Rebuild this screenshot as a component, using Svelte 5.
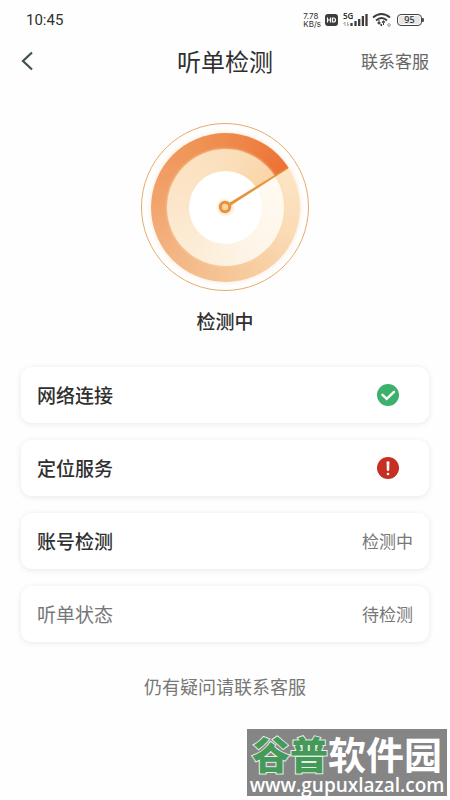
<script>
  const checks = [
    { label: '网络连接', state: 'ok' },
    { label: '定位服务', state: 'error' },
    { label: '账号检测', state: 'running', text: '检测中' },
    { label: '听单状态', state: 'waiting', text: '待检测' }
  ];
</script>

<div class="screen">
  <div class="status">
    <span class="time">10:45</span>
    <div class="indicators">
      <div class="speed"><span>7.78</span><span>KB/s</span></div>
      <svg width="13" height="12" viewBox="0 0 13 12" aria-hidden="true">
        <rect width="13" height="12" rx="3" fill="#3c3c3c" />
        <path d="M2.500 3.500v5M5.500 3.500v5M2.500 6h3M7.500 4h1q2 0 2 2t-2 2h-1z" fill="none" stroke="#fff" stroke-width="1.200" />
      </svg>
      <div class="signal">
        <span>5G</span>
        <svg width="25" height="14" viewBox="0 0 25 14" aria-hidden="true">
          <path d="M.5 11L2 9v4M4.500 9v4L6 11" fill="none" stroke="#aaa" stroke-width="1" />
          <path d="M8.500 10v3M12.500 8v5M16.200 6v7M19.900 3v10M23.500 1v12" stroke="#3c3c3c" stroke-width="2.300" />
        </svg>
      </div>
      <svg class="wifi" width="19" height="14" viewBox="0 0 19 14" aria-hidden="true">
        <path d="M1 4.500Q9.500-2.500 18 4.500M4 7.500Q9.500 2.500 15 7.500" fill="none" stroke="#3c3c3c" stroke-width="1.800" />
        <path d="M7 7v4M5.500 9.500L7 11l1.500-1.500M11.500 12V8M10 9.500L11.500 8 13 9.500" fill="none" stroke="#444" stroke-width="1.100" />
        <path d="M9 11l.5 2" stroke="#333" stroke-width="1.500" />
        <circle cx="17" cy="12" r="1.300" fill="none" stroke="#999" />
      </svg>
      <div class="battery"><span>95</span></div>
    </div>
  </div>

  <header>
    <button class="back" aria-label="返回">
      <svg width="14" height="20" viewBox="0 0 14 20" aria-hidden="true">
        <path d="M11 1.500L2 10l9 8.500" fill="none" stroke="#40504d" stroke-width="2.200" />
      </svg>
    </button>
    <h1>听单检测</h1>
    <a href="#service">联系客服</a>
  </header>

  <main>
    <div class="dial">
      <div class="outer"></div>
      <div class="middle"></div>
      <div class="core"></div>
      <svg viewBox="0 0 170 170" aria-hidden="true">
        <circle cx="85" cy="85" r="83.500" fill="none" stroke="#e5ab6d" />
        <path d="M89.500 81L147.500 45.500l.5.800L90.800 83.200z" fill="#e49338" stroke="#e49338" stroke-width=".5" />
        <circle cx="85" cy="85" r="4.700" fill="#fad5a6" stroke="#e6933d" stroke-width="3" />
      </svg>
    </div>
    <p class="progress">检测中</p>

    <ul>
      {#each checks as item}
        <li class:waiting={item.state === 'waiting'}>
          <span class="label">{item.label}</span>
          {#if item.text}
            <span class="result">{item.text}</span>
          {:else if item.state === 'ok'}
            <svg class="icon" viewBox="0 0 22 22" role="img" aria-label="正常">
              <circle cx="11" cy="11" r="11" fill="#3bb16b" />
              <path d="M5.500 10.800l4.200 4 7.300-7" fill="none" stroke="#fff" stroke-width="2.500" stroke-linecap="round" stroke-linejoin="miter" />
            </svg>
          {:else}
            <svg class="icon" viewBox="0 0 22 22" role="img" aria-label="异常">
              <circle cx="11" cy="11" r="11" fill="#c53022" />
              <path d="M9.600 5.300q0-1 1.400-1t1.400 1l-.2 7.800q-.1.900-1.200.9t-1.200-.9z" fill="#fff" />
              <circle cx="11" cy="17" r="1.300" fill="#fff" />
            </svg>
          {/if}
        </li>
      {/each}
    </ul>

    <a class="help" href="#service">仍有疑问请联系客服</a>
  </main>

  <div class="watermark">
    <div class="brand"><b>谷普</b>软件园</div>
    <div class="site">www.gupuxlazal.com</div>
  </div>
</div>

<style>
  :global(body) {
    margin: 0;
    background: #fefefe;
  }
  .screen {
    position: relative;
    min-height: 100vh;
    background: #fefefe;
    color: #303030;
    font-family: 'Noto Sans CJK SC', sans-serif;
  }
  .status {
    display: flex;
    align-items: center;
    justify-content: space-between;
    height: 40px;
    padding: 0 28px 0 26px;
  }
  .time {
    font-family: Roboto, sans-serif;
    font-size: 15px;
    font-weight: 400;
  }
  .indicators {
    display: flex;
    align-items: center;
    gap: 4px;
  }
  .speed {
    display: flex;
    flex-direction: column;
    font: 400 8px/8px Inter, sans-serif;
  }
  .signal {
    position: relative;
    height: 14px;
    margin-left: 1px;
  }
  .signal svg {
    display: block;
  }
  .signal span {
    position: absolute;
    left: 0;
    top: -1px;
    font: 600 8px/8px 'Noto Sans', sans-serif;
  }
  .battery {
    position: relative;
    box-sizing: border-box;
    width: 25px;
    height: 12px;
    margin-left: 2px;
    border: 1px solid #444;
    border-radius: 4px;
    background: #e6e6e6;
    box-shadow: inset 0 0 0 1px #fff;
    font: 500 9px/10px 'Noto Sans', sans-serif;
    text-align: center;
  }
  .battery::after {
    content: '';
    position: absolute;
    right: -3px;
    top: 3px;
    width: 2px;
    height: 4px;
    background: #555;
    border-radius: 0 1px 1px 0;
  }
  header {
    display: grid;
    grid-template-columns: 1fr auto 1fr;
    align-items: center;
    height: 42px;
    padding: 0 21px;
  }
  .back {
    display: flex;
    justify-self: start;
    padding: 0;
    border: 0;
    background: none;
  }
  h1 {
    margin: 0;
    font-size: 24px;
    line-height: 32px;
    font-weight: 400;
  }
  header a {
    justify-self: end;
    color: #666;
    font-size: 17px;
    line-height: 24px;
    text-decoration: none;
  }
  main {
    display: flex;
    flex-direction: column;
    align-items: center;
    padding: 40px 21px 100px;
  }
  .dial {
    display: grid;
    place-items: center;
    width: 170px;
    height: 170px;
  }
  .dial > * {
    grid-area: 1 / 1;
    border-radius: 50%;
  }
  .dial svg {
    position: relative;
    width: 170px;
    height: 170px;
  }
  .outer {
    width: 149px;
    height: 149px;
    background: conic-gradient(from 58deg, #fce5c6, #fadbb4 15%, #f6ca9b 30%, #f3b887 45%, #f2a670 58%, #ef9558 75%, #ee8648 88%, #ed7034);
    box-shadow: 0 0 5px #fce6cf;
  }
  .middle {
    width: 117px;
    height: 117px;
    background: conic-gradient(from 58deg, #fffaf2, #fef5e8 25%, #fcecd6 45%, #fce4c6 65%, #fbdfbb 85%, #fad5a8);
    box-shadow: 0 0 3px #f9d9b2;
  }
  .core {
    width: 73px;
    height: 73px;
    background: radial-gradient(circle, #fce3c4 0 5px, #fff 10px);
  }
  .progress {
    margin: 15px 0 32px;
    font-size: 19px;
    line-height: 28px;
    font-weight: 500;
  }
  ul {
    display: flex;
    flex-direction: column;
    gap: 17px;
    align-self: stretch;
    margin: 0;
    padding: 0;
    list-style: none;
  }
  li {
    display: flex;
    align-items: center;
    justify-content: space-between;
    height: 56px;
    padding: 0 16px;
    border-radius: 11px;
    background: #fff;
    box-shadow: 0 1px 6px rgba(0, 0, 0, 0.09);
  }
  .label {
    font-size: 19px;
    line-height: 28px;
    font-weight: 500;
  }
  .waiting .label {
    color: #777;
    font-weight: 400;
  }
  .result {
    color: #777;
    font-size: 17px;
    line-height: 24px;
  }
  .icon {
    width: 22px;
    height: 22px;
    margin-right: 14px;
  }
  .help {
    margin-top: 31px;
    color: #777;
    font-size: 18px;
    line-height: 26px;
    text-decoration: none;
  }
  .watermark {
    position: absolute;
    right: 3px;
    bottom: 4px;
    width: 200px;
    height: 67px;
    background: #858585;
    color: #fff;
    text-align: center;
    white-space: nowrap;
  }
  .brand {
    font-size: 38px;
    line-height: 47px;
    font-weight: 700;
  }
  .brand b {
    color: #469a59;
    font-weight: 900;
    -webkit-text-stroke: 2px #e5eee6;
    paint-order: stroke fill;
  }
  .site {
    font: 600 19px/18px 'Open Sans', sans-serif;
  }
</style>
